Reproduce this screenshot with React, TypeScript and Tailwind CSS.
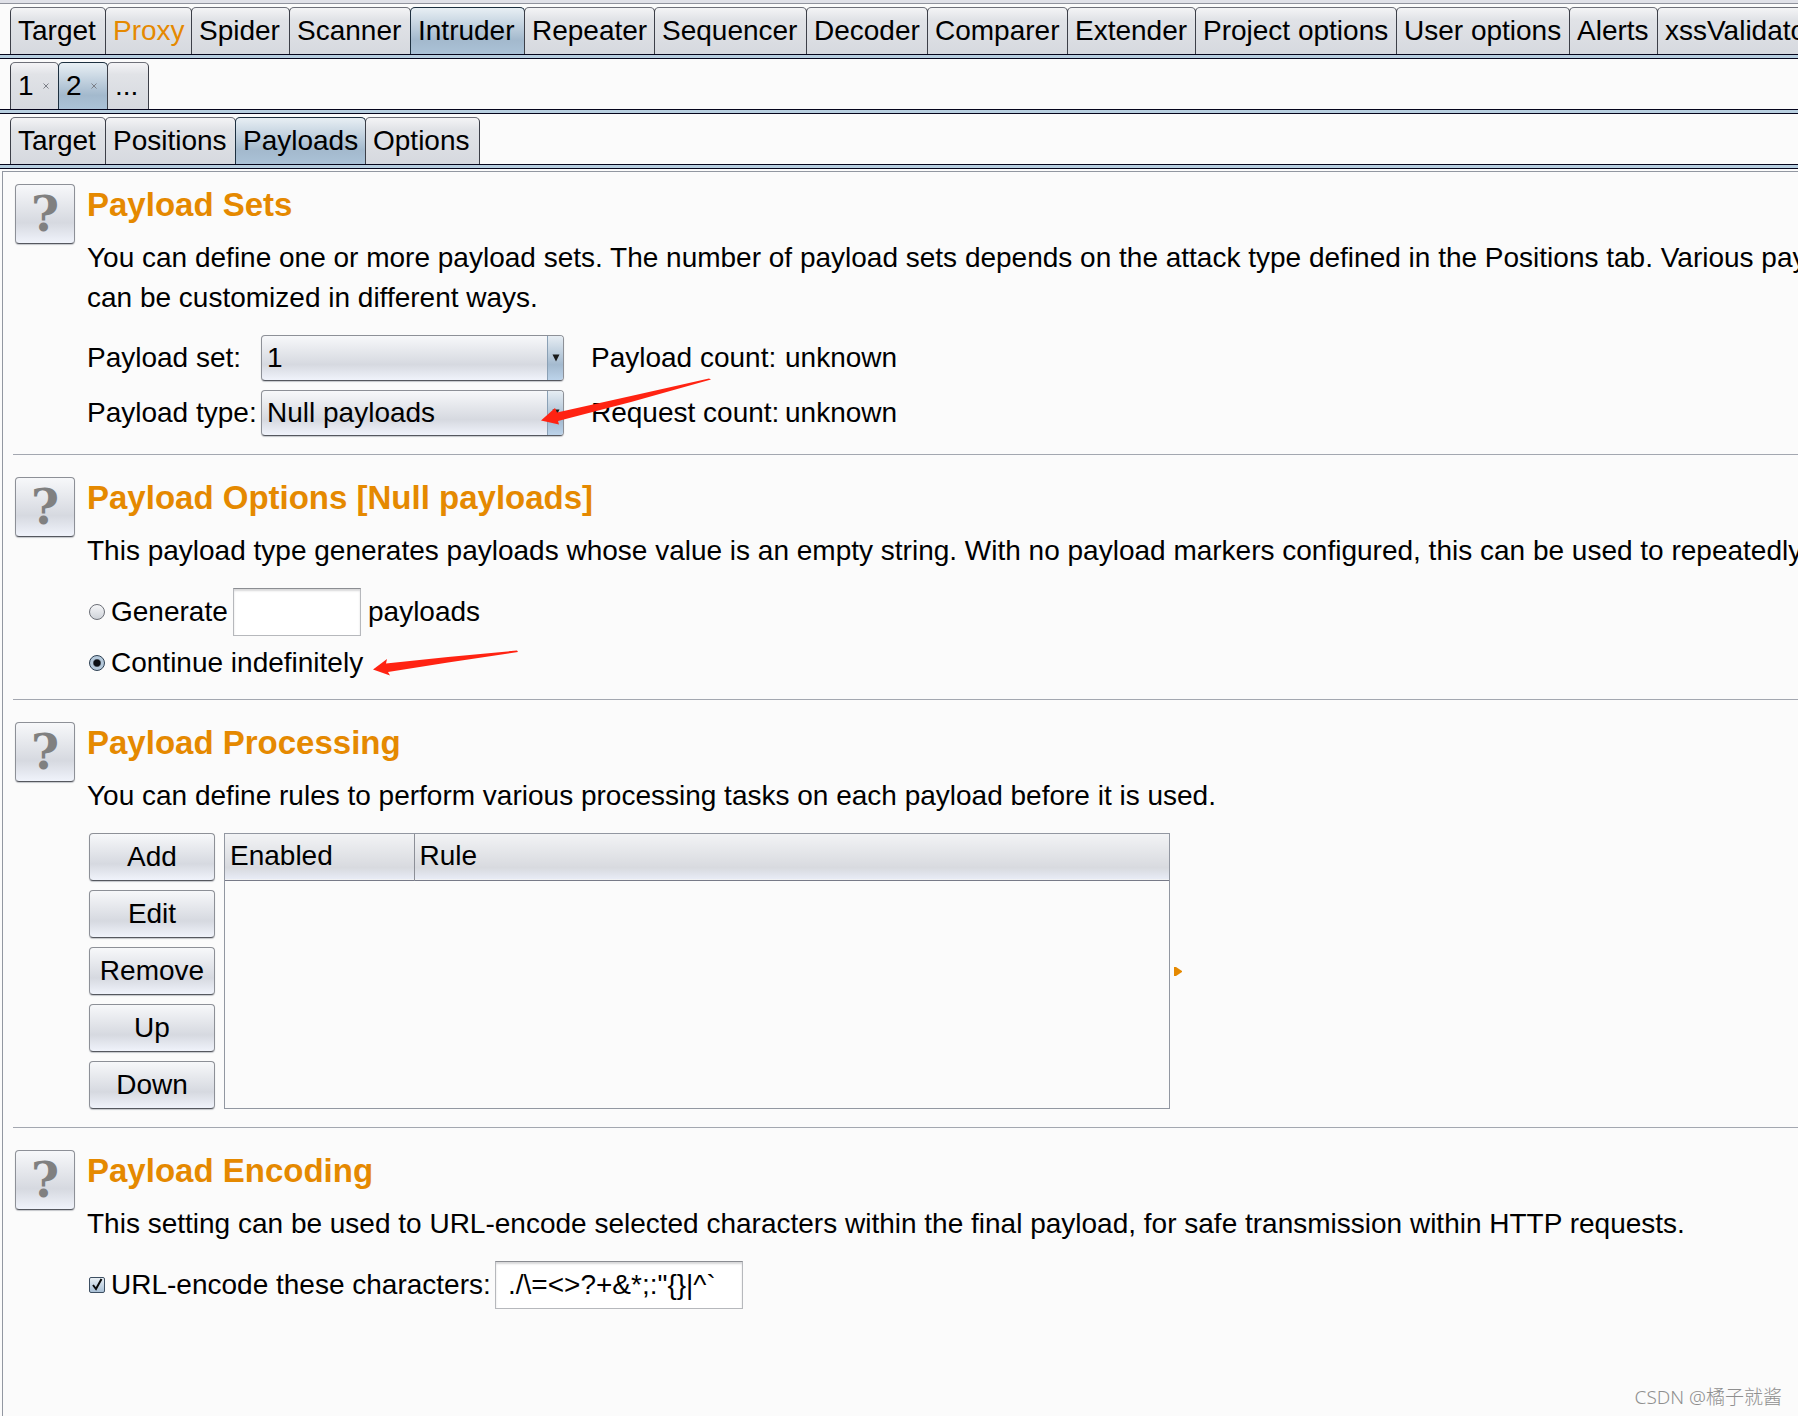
import React, { useState } from "react";
import clsx from "clsx";

const mainTabs = [
  { label: "Target", width: "w-[96px]" },
  { label: "Proxy", width: "w-[87px]", alert: true },
  { label: "Spider", width: "w-[99px]" },
  { label: "Scanner", width: "w-[122px]" },
  { label: "Intruder", width: "w-[115px]" },
  { label: "Repeater", width: "w-[131px]" },
  { label: "Sequencer", width: "w-[153px]" },
  { label: "Decoder", width: "w-[122px]" },
  { label: "Comparer", width: "w-[141px]" },
  { label: "Extender", width: "w-[129px]" },
  { label: "Project options", width: "w-[202px]" },
  { label: "User options", width: "w-[174px]" },
  { label: "Alerts", width: "w-[89px]" },
  { label: "xssValidator", width: "w-[173px]" },
];

const attackTabs = [
  { label: "1", width: "w-[49px]", closable: true },
  { label: "2", width: "w-[50px]", closable: true },
  { label: "...", width: "w-[42px]" },
];

const intruderTabs = [
  { label: "Target", width: "w-[96px]" },
  { label: "Positions", width: "w-[131px]" },
  { label: "Payloads", width: "w-[131px]" },
  { label: "Options", width: "w-[115px]" },
];

interface TabItem {
  label: string;
  width: string;
  alert?: boolean;
  closable?: boolean;
}

const TabBar: React.FC<{
  items: TabItem[];
  active: string;
  onSelect: (label: string) => void;
}> = ({ items, active, onSelect }) => (
  <div className="pt-[3px]">
    <div role="tablist" className="flex h-[47px] overflow-hidden pl-[10px]">
      {items.map((item) => (
        <button
          key={item.label}
          type="button"
          role="tab"
          aria-selected={item.label === active}
          onClick={() => onSelect(item.label)}
          className={clsx(
            "-mr-px flex shrink-0 items-center rounded-t-[5px] border border-b-0 pl-[7px] whitespace-nowrap",
            item.width,
            item.label === active
              ? "border-[#1d3040] bg-linear-to-b from-[#e8eff4] via-[#a3b9cd] via-70% to-[#abc2d7]"
              : "border-[#3c3f48] border-t-[#6e7079] bg-linear-to-b from-[#f4f4f6] via-[#e1e3e7] via-25% to-[#d6d9df]",
            item.alert && "text-[#e58900]",
          )}
        >
          {item.label}
          {item.closable && (
            <svg viewBox="0 0 6 6" className="ml-[9px] size-[6px]">
              <path d="M0.5 0.5l5 5M5.5 0.5l-5 5" stroke="#7c7f87" />
            </svg>
          )}
        </button>
      ))}
    </div>
    <div className="h-[5px] border-y border-[#05051c] bg-[#b8cfe0]" />
  </div>
);

const raised =
  "rounded-[4px] border border-[#8d9097] border-b-[#55585f] bg-linear-to-b from-[#f7f8fa] via-[#d6d9e0] via-65% to-[#f0f3fb] shadow-[0_1px_1px_#c4c6ca]";

const Section: React.FC<{ title: string; text: string; children: React.ReactNode }> = ({
  title,
  text,
  children,
}) => (
  <section className="ml-[10px] flex gap-[12px] border-b border-[#a3a7b0] pt-[22px] pb-[17px] pl-[2px] first:pt-[12px] last:border-b-0">
    <button
      type="button"
      aria-label={`Help: ${title}`}
      className={clsx(
        raised,
        "flex size-[60px] shrink-0 items-center justify-center font-['DejaVu_Serif',serif] text-[48px] leading-[56px] font-bold text-[#808080]",
      )}
    >
      ?
    </button>
    <div className="min-w-0 grow">
      <h2 className="mb-[12px] text-[33px] leading-[42px] font-bold text-[#e58900]">{title}</h2>
      <p className="mb-[17px] whitespace-pre leading-[40px]">{text}</p>
      {children}
    </div>
  </section>
);

const Combo: React.FC<{ id: string; options: string[]; initial: string }> = ({
  id,
  options,
  initial,
}) => (
  <div className={clsx(raised, "relative flex h-[46px] w-[303px] overflow-hidden")}>
    <select
      id={id}
      defaultValue={initial}
      className="h-full w-full appearance-none bg-transparent pl-[5px] outline-none"
    >
      {options.map((option) => (
        <option key={option}>{option}</option>
      ))}
    </select>
    <span className="pointer-events-none absolute inset-y-0 right-0 flex w-[16px] items-center justify-center border-l border-[#8aa0b5] bg-linear-to-b from-[#e6edf3] via-[#a4bacf] via-65% to-[#bcd3ea]">
      <svg viewBox="0 0 8 8" className="size-[8px]">
        <path d="M0.5 0.5h7L4 7.5z" fill="#1b1b1b" />
      </svg>
    </span>
  </div>
);

const field =
  "h-[48px] border border-[#b6b8bc] border-t-[#8b8d92] bg-white px-[12px] shadow-[inset_0_2px_2px_#d8d8da] outline-none";

const radio =
  "size-[16px] appearance-none rounded-full border border-[#6b6e76] bg-linear-to-b from-[#f6f7f9] to-[#cfd3d9] checked:border-[#2c3f52] checked:bg-radial checked:from-[#0c0f14] checked:from-30% checked:to-[#b4c8da] checked:to-45%";

const ruleActions = ["Add", "Edit", "Remove", "Up", "Down"];

export default function App() {
  const [mainTab, setMainTab] = useState("Intruder");
  const [attackTab, setAttackTab] = useState("2");
  const [intruderTab, setIntruderTab] = useState("Payloads");

  return (
    <div className="relative flex min-h-screen flex-col overflow-hidden bg-[#fbfbfb] font-['Liberation_Sans',Arial,sans-serif] text-[28px] leading-[36px] text-black">
      <div className="h-[4px] border-b border-[#8f929c] bg-[#e0e1e8]" />
      <TabBar items={mainTabs} active={mainTab} onSelect={setMainTab} />
      <TabBar items={attackTabs} active={attackTab} onSelect={setAttackTab} />
      <TabBar items={intruderTabs} active={intruderTab} onSelect={setIntruderTab} />

      <main className="mt-[2px] ml-[2px] grow border-t border-l border-[#9297a1]">
        <Section
          title="Payload Sets"
          text={
            "You can define one or more payload sets. The number of payload sets depends on the attack type defined in the Positions tab. Various payload\ncan be customized in different ways."
          }
        >
          <div className="grid grid-cols-[174px_330px_194px_auto] items-center gap-y-[9px] pb-px">
            <label htmlFor="payload-set">Payload set:</label>
            <Combo id="payload-set" options={["1"]} initial="1" />
            <span>Payload count:</span>
            <span>unknown</span>
            <label htmlFor="payload-type">Payload type:</label>
            <Combo
              id="payload-type"
              options={["Simple list", "Numbers", "Null payloads"]}
              initial="Null payloads"
            />
            <span>Request count:</span>
            <span>unknown</span>
          </div>
        </Section>

        <Section
          title="Payload Options [Null payloads]"
          text="This payload type generates payloads whose value is an empty string. With no payload markers configured, this can be used to repeatedly"
        >
          <div className="flex h-[48px] items-center pl-[2px]">
            <input id="generate" type="radio" name="mode" className={radio} />
            <label htmlFor="generate" className="ml-[6px] w-[122px]">
              Generate
            </label>
            <input aria-label="Number of payloads" className={clsx(field, "w-[128px]")} />
            <span className="ml-[7px]">payloads</span>
          </div>
          <div className="mt-[9px] flex h-[36px] items-center pl-[2px]">
            <input id="continue" type="radio" name="mode" defaultChecked className={radio} />
            <label htmlFor="continue" className="ml-[6px]">
              Continue indefinitely
            </label>
          </div>
          <div className="h-px" />
        </Section>

        <Section
          title="Payload Processing"
          text="You can define rules to perform various processing tasks on each payload before it is used."
        >
          <div className="flex pb-px pl-[2px]">
            <div className="flex w-[126px] flex-col gap-[9px]">
              {ruleActions.map((action) => (
                <button key={action} type="button" className={clsx(raised, "h-[48px]")}>
                  {action}
                </button>
              ))}
            </div>
            <div className="ml-[9px] w-[946px] border border-[#9297a1]">
              <table className="w-full table-fixed border-collapse">
                <thead>
                  <tr className="h-[46px] border-b border-[#777a88] bg-linear-to-b from-[#f2f3f5] via-[#d8dadf] via-75% to-[#e8ecf6] text-left">
                    <th className="w-[189px] border-r border-[#8c8f97] pb-[2px] pl-[5px] font-normal">
                      Enabled
                    </th>
                    <th className="pb-[2px] pl-[5px] font-normal">Rule</th>
                  </tr>
                </thead>
                <tbody />
              </table>
            </div>
            <svg viewBox="0 0 8 9" className="ml-[4px] h-[9px] w-[8px] self-center">
              <path d="M0 0h2L8 4v1L2 9H0z" fill="#e58900" />
            </svg>
          </div>
        </Section>

        <Section
          title="Payload Encoding"
          text="This setting can be used to URL-encode selected characters within the final payload, for safe transmission within HTTP requests."
        >
          <div className="flex items-center pl-[2px]">
            <span className="relative flex size-[16px]">
              <input
                id="url-encode"
                type="checkbox"
                defaultChecked
                className="peer size-[16px] appearance-none rounded-[2px] border border-[#3d4f62] bg-linear-to-b from-[#e9eff4] to-[#a9c0d6]"
              />
              <svg
                viewBox="0 0 16 16"
                className="pointer-events-none absolute inset-0 hidden peer-checked:block"
              >
                <path d="M4 8l3 4 5.500-10" fill="none" stroke="#0a0a0a" strokeWidth="2" />
              </svg>
            </span>
            <label htmlFor="url-encode" className="ml-[6px] w-[384px] whitespace-nowrap">
              URL-encode these characters:
            </label>
            <input
              aria-label="Characters to encode"
              defaultValue={'./\\=<>?+&*;:"{}|^`'}
              className={clsx(field, "w-[248px]")}
            />
          </div>
        </Section>
      </main>

      <svg viewBox="0 0 170 47" className="pointer-events-none absolute top-[378px] left-[541px] w-[170px]">
        <path d="M0 42.500L14 30L16 34.500L90 18L168 0.500L170 1.500L90 24L17 43L18 46.500z" fill="#ff2312" />
      </svg>
      <svg viewBox="0 0 146 26" className="pointer-events-none absolute top-[650px] left-[373px] w-[146px]">
        <path d="M0 19.500L14 9L13 13.500L75 7L144 0.500L145 2L75 12.500L15 22L17 25.500z" fill="#ff2312" />
      </svg>
      <span className="absolute right-[16px] bottom-[4px] font-['Noto_Sans','Noto_Sans_CJK_SC',sans-serif] text-[19px] leading-[30px] font-light text-[#8f8f8f]">
        CSDN @橘子就酱
      </span>
    </div>
  );
}
